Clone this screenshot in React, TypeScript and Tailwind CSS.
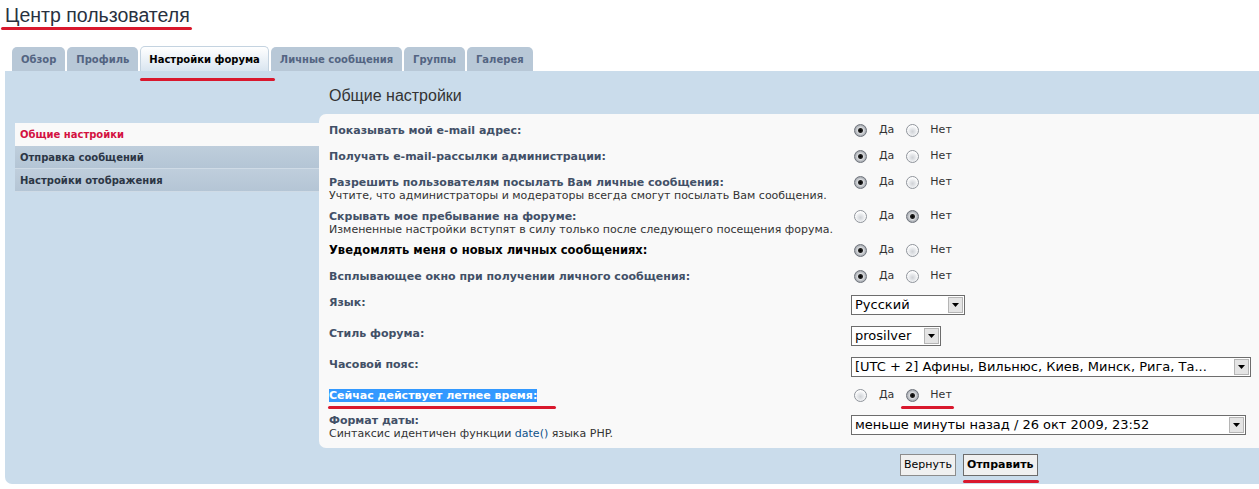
import type { ReactNode } from 'react';

const TABS = ['Обзор', 'Профиль', 'Настройки форума', 'Личные сообщения', 'Группы', 'Галерея'];
const ACTIVE_TAB = 'Настройки форума';

const MENU = ['Общие настройки', 'Отправка сообщений', 'Настройки отображения'];

function Radio({ checked }: { checked: boolean }) {
  return checked ? (
    <span className="inline-block w-[13px] h-[13px] rounded-full border border-[#6f747c] bg-[radial-gradient(circle,#000_0,#222_2px,#d9dbde_3px,#9ca1a8_6px)]" />
  ) : (
    <span className="inline-block w-[13px] h-[13px] rounded-full border border-[#8f949b] bg-[radial-gradient(circle_at_50%_60%,#cfd2d6_0,#e6e8eb_3px,#ffffff_6px)]" />
  );
}

function YesNo({ yes }: { yes: boolean }) {
  return (
    <div className="flex items-center h-[13px] pl-[3px] text-[11px] text-[#333]">
      <Radio checked={yes} />
      <span className="ml-[12px] mr-[12px]">Да</span>
      <Radio checked={!yes} />
      <span className="ml-[11px]">Нет</span>
    </div>
  );
}

function Select({ value, width }: { value: string; width: string }) {
  return (
    <div className={`flex items-center h-[20px] border border-[#6d6d6d] bg-white ${width}`}>
      <span className="flex-1 pl-[3px] text-[13px] leading-[18px] text-black whitespace-nowrap overflow-hidden">{value}</span>
      <span className="flex items-center justify-center w-[15px] h-[16px] mr-[1px] bg-[#e4e4e4] border border-[#b5b5b5]">
        <svg width="7" height="4" viewBox="0 0 7 4">
          <path d="M0 0h7L3.5 4z" fill="#000" />
        </svg>
      </span>
    </div>
  );
}

function Row({ h, label, sub, children, strong, selected }: {
  h: string;
  label: string;
  sub?: ReactNode;
  children: ReactNode;
  strong?: boolean;
  selected?: boolean;
}) {
  return (
    <div className={`flex ${h}`}>
      <div className="w-[532px] pl-[10px] leading-[13px]">
        <div className={`font-bold ${strong ? 'text-[11.5px] text-black' : 'text-[11px] text-[#425067]'}`}>
          {selected ? <span className="bg-[#3399ff] text-white">{label}</span> : label}
        </div>
        {sub && <div className="text-[11px] text-[#333]">{sub}</div>}
      </div>
      <div>{children}</div>
    </div>
  );
}

export default function App() {
  return (
    <div className="relative w-[1259px] h-[489px] bg-white overflow-hidden font-['DejaVu_Sans',sans-serif]">
      {/* Title */}
      <h2 className="pl-[5px] pt-[3px] h-[46px] text-[19.5px] leading-[24px] text-[#28313f] font-['Liberation_Sans',sans-serif]">
        Центр пользователя
      </h2>

      {/* Tabs */}
      <div className="flex items-end gap-[2px] pl-[12px] h-[25px]">
        {TABS.map((t) =>
          t === ACTIVE_TAB ? (
            <div key={t} className="h-[25px] px-[8px] flex items-center rounded-t-[5px] border border-b-0 border-[#c4d3e0] bg-[linear-gradient(#ffffff,#d9e5f0)] text-[10px] font-bold text-black">
              {t}
            </div>
          ) : (
            <div key={t} className="h-[24px] px-[9px] flex items-center rounded-t-[5px] bg-[#b8c8d7] text-[10px] font-bold text-[#536482]">
              {t}
            </div>
          ),
        )}
      </div>

      {/* Panel */}
      <div className="ml-[5px] h-[413px] bg-[#cadceb] rounded-bl-[7px] flex">
        {/* Side menu */}
        <div className="w-[314px] pl-[10px] pt-[52px]">
          {MENU.map((m, i) =>
            i === 0 ? (
              <div key={m} className="h-[23px] pl-[5px] flex items-center bg-[#f9f9f9] text-[10px] font-bold text-[#d31141]">
                {m}
              </div>
            ) : (
              <div key={m} className="h-[23px] pl-[5px] flex items-center bg-[linear-gradient(#bfcedc,#b4c5d5)] border-b border-[#cfdbe6] text-[10px] font-bold text-[#2c3645]">
                {m}
              </div>
            ),
          )}
        </div>

        {/* Main */}
        <div className="flex-1 flex flex-col">
          <div className="pl-[10px] pt-[15px] h-[43px] text-[16px] leading-[20px] text-[#333] font-['Liberation_Sans',sans-serif]">
            Общие настройки
          </div>
          <div className="h-[334px] bg-[#f9f9f9] rounded-l-[7px] pt-[10px]">
            <Row h="h-[26px]" label="Показывать мой e-mail адрес:"><YesNo yes /></Row>
            <Row h="h-[26px]" label="Получать e-mail-рассылки администрации:"><YesNo yes /></Row>
            <Row h="h-[34px]" label="Разрешить пользователям посылать Вам личные сообщения:" sub="Учтите, что администраторы и модераторы всегда смогут посылать Вам сообщения.">
              <YesNo yes />
            </Row>
            <Row h="h-[34px]" label="Скрывать мое пребывание на форуме:" sub="Измененные настройки вступят в силу только после следующего посещения форума.">
              <YesNo yes={false} />
            </Row>
            <Row h="h-[26px]" strong label="Уведомлять меня о новых личных сообщениях:"><YesNo yes /></Row>
            <Row h="h-[26px]" label="Всплывающее окно при получении личного сообщения:"><YesNo yes /></Row>
            <Row h="h-[31px]" label="Язык:">
              <div className="-mt-[1px]"><Select value="Русский" width="w-[114px]" /></div>
            </Row>
            <Row h="h-[31px]" label="Стиль форума:">
              <div className="-mt-[1px]"><Select value="prosilver" width="w-[90px]" /></div>
            </Row>
            <Row h="h-[31px]" label="Часовой пояс:">
              <div className="-mt-[1px]"><Select value="[UTC + 2] Афины, Вильнюс, Киев, Минск, Рига, Та..." width="w-[400px]" /></div>
            </Row>
            <Row h="h-[25px]" selected label="Сейчас действует летнее время:"><YesNo yes={false} /></Row>
            <Row
              h="h-[30px]"
              label="Формат даты:"
              sub={<>Синтаксис идентичен функции <span className="text-[#105289]">date()</span> языка PHP.</>}
            >
              <div className="mt-[1px]"><Select value="меньше минуты назад / 26 окт 2009, 23:52" width="w-[395px]" /></div>
            </Row>
          </div>
          <div className="flex gap-[7px] pl-[581px] pt-[6px]">
            <button className="h-[22px] px-[3px] border border-[#8c8c8c] bg-[#f0f0f0] text-[11px] text-black">Вернуть</button>
            <button className="h-[22px] px-[3px] border border-[#6c6c6c] bg-[#f0f0f0] text-[11px] font-bold text-black">Отправить</button>
          </div>
        </div>
      </div>

      {/* Red annotation marks */}
      <div className="absolute left-[1px] top-[27px] w-[191px] h-[3px] rounded-full bg-[#d9182d]" />
      <div className="absolute left-[140px] top-[78px] w-[135px] h-[3px] rounded-full bg-[#d9182d]" />
      <div className="absolute left-[328px] top-[406px] w-[228px] h-[3px] rounded-full bg-[#d9182d]" />
      <div className="absolute left-[901px] top-[406px] w-[53px] h-[3px] rounded-full bg-[#d9182d]" />
      <div className="absolute left-[963px] top-[480px] w-[76px] h-[3px] rounded-full bg-[#d9182d]" />
    </div>
  );
}
